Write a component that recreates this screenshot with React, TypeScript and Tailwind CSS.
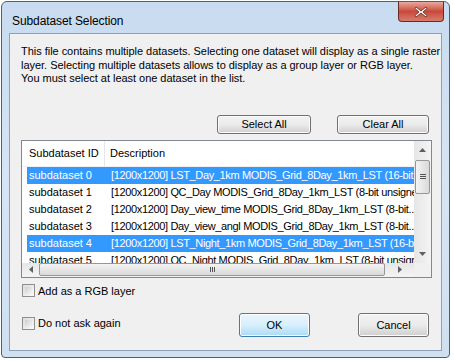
import React from "react";

const rows = [
  { id: "subdataset 0", desc: "[1200x1200] LST_Day_1km MODIS_Grid_8Day_1km_LST (16-bit...", sel: true },
  { id: "subdataset 1", desc: "[1200x1200] QC_Day MODIS_Grid_8Day_1km_LST (8-bit unsigned integer)", sel: false },
  { id: "subdataset 2", desc: "[1200x1200] Day_view_time MODIS_Grid_8Day_1km_LST (8-bit...", sel: false },
  { id: "subdataset 3", desc: "[1200x1200] Day_view_angl MODIS_Grid_8Day_1km_LST (8-bit...", sel: false },
  { id: "subdataset 4", desc: "[1200x1200] LST_Night_1km MODIS_Grid_8Day_1km_LST (16-b...", sel: true },
  { id: "subdataset 5", desc: "[1200x1200] QC_Night MODIS_Grid_8Day_1km_LST (8-bit unsigned integer)", sel: false },
];

function Checkbox({ label }: { label: string }) {
  return (
    <label className="flex items-center gap-[3px]">
      <span className="w-[13px] h-[13px] border border-[#8e8f8f] bg-gradient-to-br from-[#dcdcdc] to-[#fbfbfb] p-[2px]">
        <span className="block w-full h-full bg-gradient-to-br from-[#cbcfd5] to-[#f6f6f6]" />
      </span>
      <span>{label}</span>
    </label>
  );
}

function Button({ children, primary, className }: { children: React.ReactNode; primary?: boolean; className?: string }) {
  return (
    <button
      className={`rounded-[3px] border ${
        primary
          ? "border-[#3c7fb1] bg-gradient-to-b from-[#e9f6fd] via-[#d8effc] to-[#a9dbf6] shadow-[inset_0_0_0_1px_#ffffff]"
          : "border-[#707070] bg-gradient-to-b from-[#f2f2f2] via-[#ebebeb] to-[#cfcfcf] shadow-[inset_0_0_0_1px_#fcfcfc]"
      } ${className ?? ""}`}
    >
      {children}
    </button>
  );
}

export default function App() {
  return (
    <div
      className="w-[454px] h-[361px] bg-white text-[11px] text-black"
      style={{ fontFamily: '"Liberation Sans", Arial, sans-serif' }}
    >
      <div className="ml-[1px] mt-[1px] w-[449px] h-[357px] rounded-t-[6px] rounded-b-[4px] border border-[#4d5f73] bg-gradient-to-b from-[#c8dbef] via-[#d6e5f4] to-[#cfe0f1] px-[7px] pb-[6px] flex flex-col">
        {/* title bar */}
        <div className="h-[31px] flex items-start justify-between">
          <div className="pl-[3px] pt-[10px] text-[12px] tracking-[-0.1px]">Subdataset Selection</div>
          <div className="mr-[-2px] w-[46px] h-[20px] rounded-b-[4px] border border-t-0 border-[#6b2a25] bg-gradient-to-b from-[#e6a99c] via-[#c9483a] to-[#d77c6c] flex items-center justify-center">
            <svg width="14" height="12" viewBox="0 0 14 12">
              <path d="M2 1 L7 5 L12 1 L13 2.5 L9 6 L13 9.5 L12 11 L7 7 L2 11 L1 9.5 L5 6 L1 2.5 Z" fill="#ffffff" stroke="#5a2018" strokeWidth="0.8" />
            </svg>
          </div>
        </div>

        {/* client area */}
        <div className="flex-1 border border-[#8ea1b6] bg-[#f0f0f0] pl-[11px] pr-[12px] pt-[11px] flex flex-col">
          <div className="leading-[13.5px] whitespace-nowrap tracking-[-0.03px]">
            <div>This file contains multiple datasets. Selecting one dataset will display as a single raster</div>
            <div>layer. Selecting multiple datasets allows to display as a group layer or RGB layer.</div>
            <div>You must select at least one dataset in the list.</div>
          </div>

          <div className="mt-[29px] flex justify-end gap-[26px]">
            <Button className="w-[94px] h-[19px]">Select All</Button>
            <Button className="w-[92px] h-[19px]">Clear All</Button>
          </div>

          {/* list */}
          <div className="mt-[6px] w-[411px] h-[138px] border border-[#828790] bg-white grid grid-cols-[1fr_17px] grid-rows-[1fr_14px]">
            <div className="overflow-hidden">
              <div className="h-[26px] flex items-center border-b border-[#f0f0f0]">
                <div className="w-[83px] h-full pl-[7px] flex items-center border-r border-[#e3e6ea]">Subdataset ID</div>
                <div className="pl-[5px]">Description</div>
              </div>
              {rows.map((r) => (
                <div
                  key={r.id}
                  className={`ml-[5px] h-[17px] flex items-center whitespace-nowrap ${
                    r.sel ? "bg-[#3399ff] text-white" : ""
                  }`}
                >
                  <div className="w-[78px] pl-[2px] shrink-0">{r.id}</div>
                  <div className="pl-[6px] shrink-0 tracking-[-0.35px]">{r.desc}</div>
                </div>
              ))}
            </div>

            {/* vertical scrollbar */}
            <div className="bg-gradient-to-r from-[#e6e6e6] to-[#f4f4f4] flex flex-col items-center">
              <div className="h-[19px] flex items-center justify-center">
                <svg width="7" height="4" viewBox="0 0 7 4"><path d="M0 4 L3.5 0 L7 4 Z" fill="#606060" /></svg>
              </div>
              <div className="w-[15px] h-[34px] rounded-[2px] border border-[#979797] bg-gradient-to-r from-[#f4f4f4] to-[#d9d9d9] flex flex-col items-center justify-center gap-[1px]">
                <span className="block w-[6px] h-[1px] bg-[#555]" />
                <span className="block w-[6px] h-[1px] bg-[#555]" />
                <span className="block w-[6px] h-[1px] bg-[#555]" />
              </div>
              <div className="flex-1" />
              <div className="h-[17px] flex items-center justify-center">
                <svg width="7" height="4" viewBox="0 0 7 4"><path d="M0 0 L3.5 4 L7 0 Z" fill="#606060" /></svg>
              </div>
            </div>

            {/* horizontal scrollbar */}
            <div className="bg-gradient-to-b from-[#e6e6e6] to-[#f4f4f4] flex items-center">
              <div className="w-[17px] flex items-center justify-center">
                <svg width="4" height="7" viewBox="0 0 4 7"><path d="M4 0 L0 3.5 L4 7 Z" fill="#606060" /></svg>
              </div>
              <div className="w-[346px] h-[13px] rounded-[2px] border border-[#979797] bg-gradient-to-b from-[#f4f4f4] to-[#d9d9d9] flex items-center justify-center gap-[1px]">
                <span className="block w-[1px] h-[5px] bg-[#555]" />
                <span className="block w-[1px] h-[5px] bg-[#555]" />
                <span className="block w-[1px] h-[5px] bg-[#555]" />
              </div>
              <div className="flex-1 flex items-center justify-center">
                <svg width="4" height="7" viewBox="0 0 4 7"><path d="M0 0 L4 3.5 L0 7 Z" fill="#606060" /></svg>
              </div>
            </div>
            <div className="bg-[#f0f0f0]" />
          </div>

          <div className="mt-[5px] pl-[1px]">
            <Checkbox label="Add as a RGB layer" />
          </div>

          <div className="mt-[14px] flex items-start">
            <div className="pl-[1px] pt-[2px] flex-1">
              <Checkbox label="Do not ask again" />
            </div>
            <Button primary className="w-[71px] h-[24px] mr-[48px]">OK</Button>
            <Button className="w-[71px] h-[24px]">Cancel</Button>
          </div>
        </div>
      </div>
    </div>
  );
}
